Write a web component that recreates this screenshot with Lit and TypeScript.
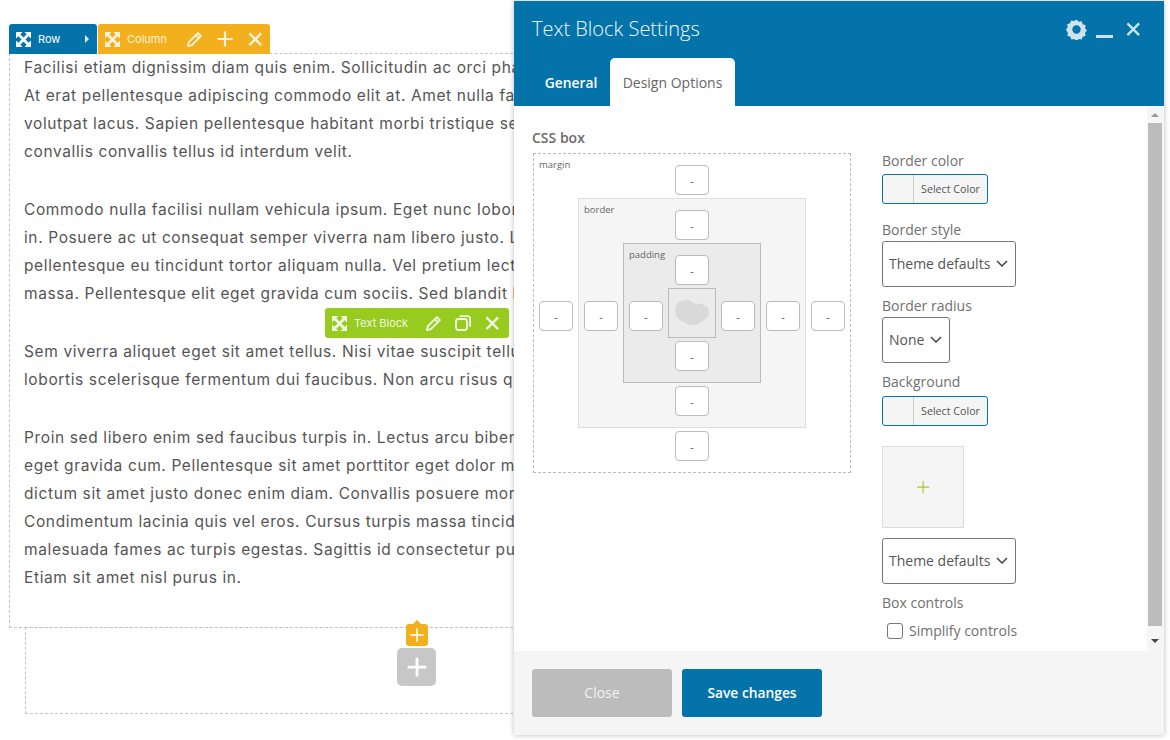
import { LitElement, html, css, svg } from "lit";
import { customElement } from "lit/decorators.js";

const paragraphs = [
  ["Facilisi etiam dignissim diam quis enim. Sollicitudin ac orci phasellus egestas tellus",
   "At erat pellentesque adipiscing commodo elit at. Amet nulla facilisi morbi tempus",
   "volutpat lacus. Sapien pellentesque habitant morbi tristique senectus et netus",
   "convallis convallis tellus id interdum velit."],
  ["Commodo nulla facilisi nullam vehicula ipsum. Eget nunc lobortis mattis aliquam",
   "in. Posuere ac ut consequat semper viverra nam libero justo. Laoreet sit amet",
   "pellentesque eu tincidunt tortor aliquam nulla. Vel pretium lectus quam id leo",
   "massa. Pellentesque elit eget gravida cum sociis. Sed blandit libero volutpat"],
  ["Sem viverra aliquet eget sit amet tellus. Nisi vitae suscipit tellus mauris a diam",
   "lobortis scelerisque fermentum dui faucibus. Non arcu risus quis varius quam"],
  ["Proin sed libero enim sed faucibus turpis in. Lectus arcu bibendum at varius vel",
   "eget gravida cum. Pellentesque sit amet porttitor eget dolor morbi non arcu",
   "dictum sit amet justo donec enim diam. Convallis posuere morbi leo urna molestie",
   "Condimentum lacinia quis vel eros. Cursus turpis massa tincidunt dui ut ornare",
   "malesuada fames ac turpis egestas. Sagittis id consectetur purus ut faucibus",
   "Etiam sit amet nisl purus in."],
];

const ico = (w: number, body: unknown, vb = "0 0 16 16") =>
  html`<svg class="ico" width=${w} height=${w} viewBox=${vb}>${body}</svg>`;

const moveIcon = ico(15, svg`
  <path fill="none" stroke="currentColor" stroke-width="3" d="M3 3l10 10M13 3L3 13"/>
  <path fill="currentColor" d="M0 0h7L0 7zM16 0v7L9 0zM0 16V9L7 16zM16 16H9L16 9z"/>`);
const pencil = ico(15, svg`
  <path d="M11.600 1.200l3.200 3.200-9.600 9.600-4.200 1 1-4.200z" fill="none" stroke="currentColor" stroke-width="2" stroke-linejoin="round"/>
  <path d="M9.400 3.400l3.200 3.200" stroke="currentColor" stroke-width="1.700"/>`);
const plus = ico(16, svg`<path d="M8 .5v15M.5 8h15" stroke="currentColor" stroke-width="2.200" fill="none"/>`);
const close = ico(15, svg`<path d="M1.500 1.500l12.500 12.500M14 1.500L1.500 14" stroke="currentColor" stroke-width="2.500" fill="none"/>`);
const copy = ico(16, svg`
  <rect x="1" y="4" width="11" height="11" rx="2.500" fill="none" stroke="currentColor" stroke-width="1.800"/>
  <path d="M4.500 1.200h8.300a2.300 2.300 0 0 1 2.300 2.300v8.300" fill="none" stroke="currentColor" stroke-width="1.800"/>`);
const gear = ico(21, svg`
  <path fill-rule="evenodd" fill="currentColor" d="M10.500 .5l2.200 2.300 3-.6 1 3 3 1-.7 3 2 2.300-2 2.300.7 3-3 1-1 2.800-3-.6-2.200 2.300-2.200-2.300-3 .6-1-2.800-3-1 .7-3L-.200 10.500l2-2.300-.7-3 3-1 1-2.800 3 .6zM10.500 6.300a4.200 4.200 0 1 0 0 8.400 4.200 4.200 0 0 0 0-8.400z"/>`, "0 0 21 21");
const chevron = html`<svg class="chev" width="12" height="7" viewBox="0 0 12 7"><path d="M1 1l5 5 5-5" fill="none" stroke="#444" stroke-width="1.500"/></svg>`;
const cloud = html`<svg width="34" height="26" viewBox="0 0 34 26"><path fill="#d9d9d9" d="M0 10C0 3 6 0 11 0c4 0 8 2 10 5 2-2 6-2 8 0 4 1 5 5 5 8 0 5-5 8-9 9-1 2-4 3-7 3s-6 0-8-3C4 22 0 16 0 10z"/></svg>`;

@customElement("app-root")
export class AppRoot extends LitElement {
  static styles = css`
    :host { display: block; position: relative; width: 1170px; height: 740px; overflow: hidden; background: #fff; font-family: "Open Sans", sans-serif; color: #666; }
    .ico { display: block; flex: none; }
    .page { padding: 53px 0 0 9px; }
    .col-box { box-sizing: border-box; width: 1100px; height: 575px; border: 1px dashed #c4c4c4; padding: 0 14px; overflow: hidden; font-family: Inter, sans-serif; font-size: 15.500px; letter-spacing: .62px; line-height: 28px; color: #555; }
    .col-box p { margin: 0 0 30px; white-space: nowrap; }
    .add-box { box-sizing: border-box; width: 783px; height: 87px; margin: -1px 0 0 16px; border: 1px dashed #c4c4c4; display: flex; justify-content: center; padding-top: 20px; }
    .big-plus { width: 39px; height: 38px; border-radius: 5px; background: #c7c7c7; color: #fff; display: flex; align-items: center; justify-content: center; }
    .big-plus .ico { width: 20px; height: 20px; }

    .bar { position: absolute; height: 30px; display: flex; align-items: center; color: #fff; border-radius: 3px 3px 0 0; font-family: Inter, sans-serif; font-size: 11px; box-sizing: border-box; }
    .row-bar { left: 9px; top: 24px; width: 88px; background: #0473aa; padding-left: 7px; }
    .row-bar span { margin-left: 7px; flex: 1; }
    .caret { width: 0; height: 0; border-left: 4px solid #dfeaf0; border-top: 4px solid transparent; border-bottom: 4px solid transparent; margin-right: 8px; }
    .col-bar { left: 98px; top: 24px; width: 172px; background: #f3b01e; padding-left: 7px; color: #fdf3dc; }
    .col-bar span { margin-left: 7px; width: 53px; }
    .col-bar .tools { display: flex; gap: 15px; align-items: center; margin-left: 7px; }
    .block-bar { left: 325px; top: 308px; width: 184px; background: #97cb20; padding-left: 7px; border-radius: 3px; color: #f3f8e4; }
    .block-bar span { margin-left: 7px; width: 60px; }
    .block-bar .tools { display: flex; gap: 14px; align-items: center; margin-left: 12px; }
    .orange-add { position: absolute; left: 406px; top: 624px; width: 22px; height: 22px; border-radius: 3px; background: #f3b01e; color: #fdf3dc; display: flex; align-items: center; justify-content: center; }
    .orange-add::before { content: ""; position: absolute; left: 7px; top: -4px; border-left: 4px solid transparent; border-right: 4px solid transparent; border-bottom: 4px solid #f3b01e; }
    .orange-add .ico { width: 14px; height: 14px; }

    .modal { position: absolute; left: 514px; top: 1px; width: 650px; height: 734px; display: flex; flex-direction: column; background: #fff; box-shadow: 0 0 5px rgba(0,0,0,.28); }
    .head { height: 105px; flex: none; background: #0473aa; display: flex; flex-direction: column; box-sizing: border-box; padding: 0 23px 0 18px; color: #fff; }
    .title-row { height: 57px; display: flex; align-items: center; }
    .title { font-size: 20px; font-weight: 300; flex: 1; margin-top: -3px; color: #f4f9fc; }
    .win { display: flex; align-items: center; color: #cfe3ee; }
    .win .min { width: 17px; height: 3px; background: #cfe3ee; margin: 13px 13px 0 9px; }
    .tabs { display: flex; height: 48px; }
    .tab { display: flex; align-items: center; justify-content: center; font-size: 14px; box-sizing: border-box; padding-top: 0; }
    .tab.general { width: 78px; font-size: 13.800px; font-weight: 600; color: #fff; }
    .tab.on { width: 125px; background: #fff; color: #666; border-radius: 5px 5px 0 0; }

    .body { flex: 1; position: relative; display: flex; min-height: 0; }
    .scroll { width: 17px; flex: none; margin-left: auto; background: #f6f6f6; display: flex; flex-direction: column; align-items: center; box-sizing: border-box; padding-top: 7px; }
    .scroll .up { width: 0; height: 0; border-left: 4px solid transparent; border-right: 4px solid transparent; border-bottom: 4px solid #999; margin-right: 2px; }
    .scroll .thumb { width: 14px; height: 503px; background: #bcbcbc; margin: 6px 2px 0 0; }
    .scroll .down { width: 0; height: 0; border-left: 4px solid transparent; border-right: 4px solid transparent; border-top: 4px solid #444; margin: 13px 2px 0 0; }
    .content { flex: 1; display: flex; padding: 22px 0 0 19px; }
    .left { width: 318px; margin-right: 31px; }
    .section { font-size: 14px; font-weight: 600; line-height: 20px; margin: 0 0 5px -1px; color: #6b6b6b; }

    .b { display: grid; box-sizing: border-box; grid-template-rows: 30px auto 30px; column-gap: 5px; row-gap: 3px; align-items: center; justify-items: center; }
    .b .lbl { grid-area: 1 / 1 / 1 / 3; justify-self: start; align-self: start; font-size: 9.500px; line-height: 12px; margin-top: -6px; color: #666; }
    .b .t { grid-area: 1 / 2; }
    .b .l { grid-area: 2 / 1; margin-top: 6px; }
    .b .m { grid-area: 2 / 2; }
    .b .r { grid-area: 2 / 3; margin-top: 6px; }
    .b .d { grid-area: 3 / 2; }
    .margin { width: 318px; height: 320px; border: 1px dashed #bbb; padding: 11px 5px; grid-template-columns: 34px 228px 34px; }
    .border { width: 228px; height: 230px; border: 1px solid #ddd; background: #f5f5f5; padding: 11px 5px; grid-template-columns: 34px 138px 34px; }
    .padding { width: 138px; height: 140px; border: 1px solid #bbb; background: #ebebeb; padding: 11px 5px; grid-template-columns: 34px 48px 34px; }
    .core { width: 48px; height: 50px; box-sizing: border-box; border: 1px solid #bbb; background: #ebebeb; display: flex; align-items: center; justify-content: center; }
    .core svg { margin-top: -1px; }
    .in { width: 34px; height: 30px; box-sizing: border-box; border: 1px solid #bbb; border-radius: 4px; background: #fff; font-size: 11px; color: #555; display: flex; align-items: center; justify-content: center; line-height: 1; }

    .right { width: 240px; }
    .field { font-size: 14px; line-height: 20px; color: #707070; }
    .field.first { margin-top: 23px; margin-bottom: -1px; }
    .field.style { margin-top: 16px; margin-bottom: 1px; }
    .field.radius { margin-top: 9px; margin-bottom: 1px; }
    .field.plain { margin-top: 9px; }
    .swatch { box-sizing: border-box; width: 106px; height: 30px; border: 1px solid #0473aa; border-radius: 3px; background: #f5f5f5; display: flex; font-size: 10.700px; color: #555; margin-top: 4px; overflow: hidden; }
    .swatch i { width: 30px; border-right: 1px solid #ccc; flex: none; }
    .swatch b { font-weight: 400; flex: 1; display: flex; align-items: center; justify-content: center; padding-bottom: 1px; }
    .select { box-sizing: border-box; height: 46px; border: 1px solid #777; border-radius: 3px; display: flex; align-items: center; padding: 0 7px 2px 6px; font-size: 14px; color: #555; background: #fff; justify-content: space-between; }
    .select.wide { width: 134px; }
    .select.narrow { width: 68px; }
    .select.spaced { margin-top: 10px; }
    .image { box-sizing: border-box; width: 82px; height: 82px; margin-top: 20px; padding: 2px 0 0 2px; background: #f5f5f5; border: 1px solid #ddd; display: flex; align-items: center; justify-content: center; color: #a0cf20; }
    .check { display: flex; align-items: center; margin: 8px 0 0 5px; font-size: 14px; color: #707070; line-height: 20px; }
    .check i { width: 16px; height: 16px; box-sizing: border-box; border: 1px solid #777; border-radius: 3px; margin-right: 6px; background: #fff; }

    .foot { height: 84px; flex: none; background: #f5f5f5; box-sizing: border-box; padding: 18px 18px; display: flex; gap: 10px; }
    .btn { width: 140px; height: 48px; border-radius: 3px; display: flex; align-items: center; justify-content: center; font-size: 13.800px; color: #fff; font-weight: 600; padding-bottom: 2px; box-sizing: border-box; }
    .btn.grey { background: #bcbcbc; color: #f2f2f2; font-weight: 400; font-size: 14px; }
    .btn.blue { background: #0473aa; }
  `;

  private inp(cls: string) {
    return html`<div class="in ${cls}">-</div>`;
  }

  private swatch() {
    return html`<div class="swatch"><i></i><b>Select Color</b></div>`;
  }

  render() {
    return html`
      <div class="page">
        <div class="col-box">
          ${paragraphs.map((p) => html`<p>${p.map((l) => html`<div>${l}</div>`)}</p>`)}
        </div>
        <div class="add-box"><div class="big-plus">${plus}</div></div>
      </div>

      <div class="bar row-bar">${moveIcon}<span>Row</span><div class="caret"></div></div>
      <div class="bar col-bar">${moveIcon}<span>Column</span>
        <div class="tools">${pencil}${plus}${close}</div></div>
      <div class="bar block-bar">${moveIcon}<span>Text Block</span>
        <div class="tools">${pencil}${copy}${close}</div></div>
      <div class="orange-add">${plus}</div>

      <div class="modal">
        <div class="head">
          <div class="title-row">
            <div class="title">Text Block Settings</div>
            <div class="win">${gear}<div class="min"></div>${close}</div>
          </div>
          <div class="tabs">
            <div class="tab general">General</div>
            <div class="tab on">Design Options</div>
          </div>
        </div>
        <div class="body">
          <div class="content">
            <div class="left">
              <div class="section">CSS box</div>
              <div class="b margin">
                <div class="lbl">margin</div>
                ${this.inp("t")}${this.inp("l")}
                <div class="b border m">
                  <div class="lbl">border</div>
                  ${this.inp("t")}${this.inp("l")}
                  <div class="b padding m">
                    <div class="lbl">padding</div>
                    ${this.inp("t")}${this.inp("l")}
                    <div class="core m">${cloud}</div>
                    ${this.inp("r")}${this.inp("d")}
                  </div>
                  ${this.inp("r")}${this.inp("d")}
                </div>
                ${this.inp("r")}${this.inp("d")}
              </div>
            </div>
            <div class="right">
              <div class="field first">Border color</div>
              ${this.swatch()}
              <div class="field style">Border style</div>
              <div class="select wide">Theme defaults ${chevron}</div>
              <div class="field radius">Border radius</div>
              <div class="select narrow">None ${chevron}</div>
              <div class="field plain">Background</div>
              ${this.swatch()}
              <div class="image">${ico(14, svg`<path d="M7 0v14M0 7h14" stroke="currentColor" stroke-width="1.300" fill="none"/>`)}</div>
              <div class="select wide spaced">Theme defaults ${chevron}</div>
              <div class="field plain">Box controls</div>
              <div class="check"><i></i>Simplify controls</div>
            </div>
          </div>
          <div class="scroll"><div class="up"></div><div class="thumb"></div><div class="down"></div></div>
        </div>
        <div class="foot">
          <div class="btn grey">Close</div>
          <div class="btn blue">Save changes</div>
        </div>
      </div>
    `;
  }
}
